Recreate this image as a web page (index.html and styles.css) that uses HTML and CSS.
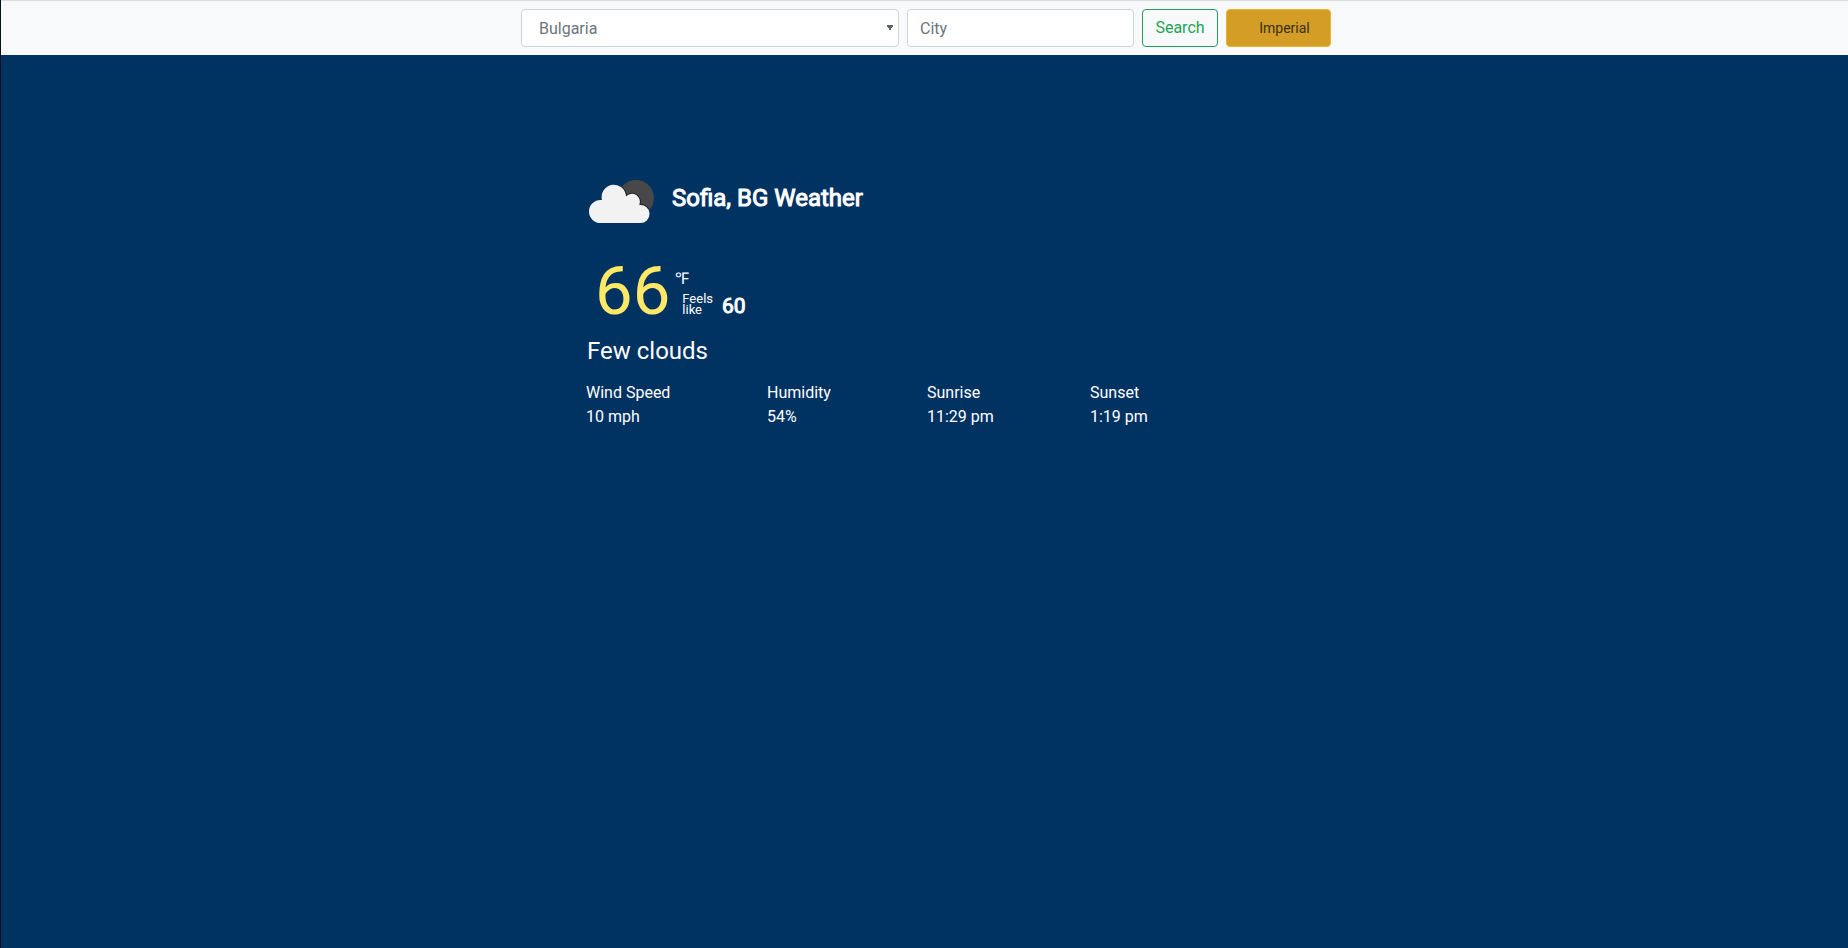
FILE: index.html
```html
<!DOCTYPE html>
<html lang="en">
<head>
<meta charset="utf-8">
<meta name="viewport" content="width=device-width, initial-scale=1">
<title>Weather</title>
<link rel="stylesheet" href="styles.css">
</head>
<body>
<header class="navbar">
  <form class="search">
    <select class="control country" aria-label="Country"><option>Bulgaria</option></select>
    <input class="control city" type="text" placeholder="City" aria-label="City">
    <button class="btn btn-search" type="button">Search</button>
    <button class="btn btn-units" type="button">Imperial</button>
  </form>
</header>
<main class="weather">
  <div class="heading">
    <svg class="icon" viewBox="0 0 66 44" aria-hidden="true">
      <defs><clipPath id="disc"><circle cx="47" cy="18" r="18"/></clipPath></defs>
      <circle cx="47" cy="18" r="18" fill="#48484a"/>
      <path clip-path="url(#disc)" d="M11.500 43A11.500 11.500 0 0 1 11.500 20H13A12.200 12.200 0 1 1 37 16.500A8 8 0 0 1 50.300 25A9.050 9.050 0 1 1 51 43Z" fill="none" stroke="#222224" stroke-width="2"/>
      <path d="M11.500 43A11.500 11.500 0 0 1 11.500 20H13A12.200 12.200 0 1 1 37 16.500A8 8 0 0 1 50.300 25A9.050 9.050 0 1 1 51 43Z" fill="#f2f2f2"/>
    </svg>
    <h1 class="title">Sofia, BG Weather</h1>
  </div>
  <div class="reading">
    <span class="temp">66</span>
    <div class="aside">
      <span class="unit">℉</span>
      <div class="feels"><span class="feels-label">Feels<br>like</span><span class="feels-value">60</span></div>
    </div>
  </div>
  <h2 class="summary">Few clouds</h2>
  <dl class="details">
    <div><dt>Wind Speed</dt><dd>10 mph</dd></div>
    <div><dt>Humidity</dt><dd>54%</dd></div>
    <div><dt>Sunrise</dt><dd>11:29 pm</dd></div>
    <div><dt>Sunset</dt><dd>1:19 pm</dd></div>
  </dl>
</main>
</body>
</html>
```
FILE: styles.css
```css
* { box-sizing: border-box; }
body {
  margin: 0;
  min-height: 100vh;
  border-left: 1px solid #0b1119;
  background: #003262;
  color: #fff;
  font: 16px/24px Roboto, sans-serif;
}
.navbar {
  padding: 8px 16px 8px 19px;
  border-top: 1px solid #dadbde;
  background: #f8f9fb;
}
.search { display: flex; justify-content: center; gap: 8px; }
.control, .btn {
  height: 38px;
  border: 1px solid #ced4da;
  border-radius: 4px;
  font: 16px/24px Roboto, sans-serif;
}
.control { min-width: 0; background-color: #fff; color: #6c757d; }
.country {
  width: 378px;
  padding: 7px 17px 5px;
  appearance: none;
  background-image: conic-gradient(from -30deg at 50% 100%, #59636d 60deg, transparent 0);
  background-size: 6px 6px;
  background-position: right 5px top 15px;
  background-repeat: no-repeat;
}
.city { width: 227px; padding: 6px 12px; }
.city::placeholder { color: #6c757d; opacity: 1; }
.btn-search { width: 76px; padding: 5px 0; border-color: #279b5b; background: transparent; color: #1fa254; }
.btn-units {
  width: 105px;
  padding: 6px 0 6px 12px;
  border-color: #eab42f;
  background: #d49d26;
  color: #372f20;
  font-size: 14px;
}
.weather { width: 44%; max-width: 675px; margin: 0 auto; padding: 125px 2px 0 0; }
.heading, .reading, .summary, .details { margin-left: -1px; }
.heading { display: flex; align-items: flex-start; gap: 17px; padding-left: 3px; }
.icon { width: 66px; height: 44px; }
.title { margin: 4px 0 0; font-size: 24px; line-height: 28px; font-weight: 400; -webkit-text-stroke: 1px #fff; }
.reading { display: flex; gap: 5px; padding: 35px 0 0 9px; }
.temp { color: #ffe866; font-size: 67px; line-height: 64px; }
.unit { display: block; padding-top: 8px; line-height: 24px; }
.feels { display: flex; align-items: flex-end; gap: 9px; padding: 2px 0 0 7px; }
.feels-label { font-size: 13px; line-height: 11px; }
.feels-value { font-size: 21px; line-height: 18px; font-weight: 400; -webkit-text-stroke: 1px #fff; }
.summary { margin-top: 14px; margin-bottom: 0; padding-left: 1px; font-size: 24px; line-height: 28px; font-weight: 400; }
.details { display: grid; grid-template-columns: 181px 160px 163px auto; margin-top: 16px; margin-bottom: 0; }
.details dd { margin: 0; }
```
